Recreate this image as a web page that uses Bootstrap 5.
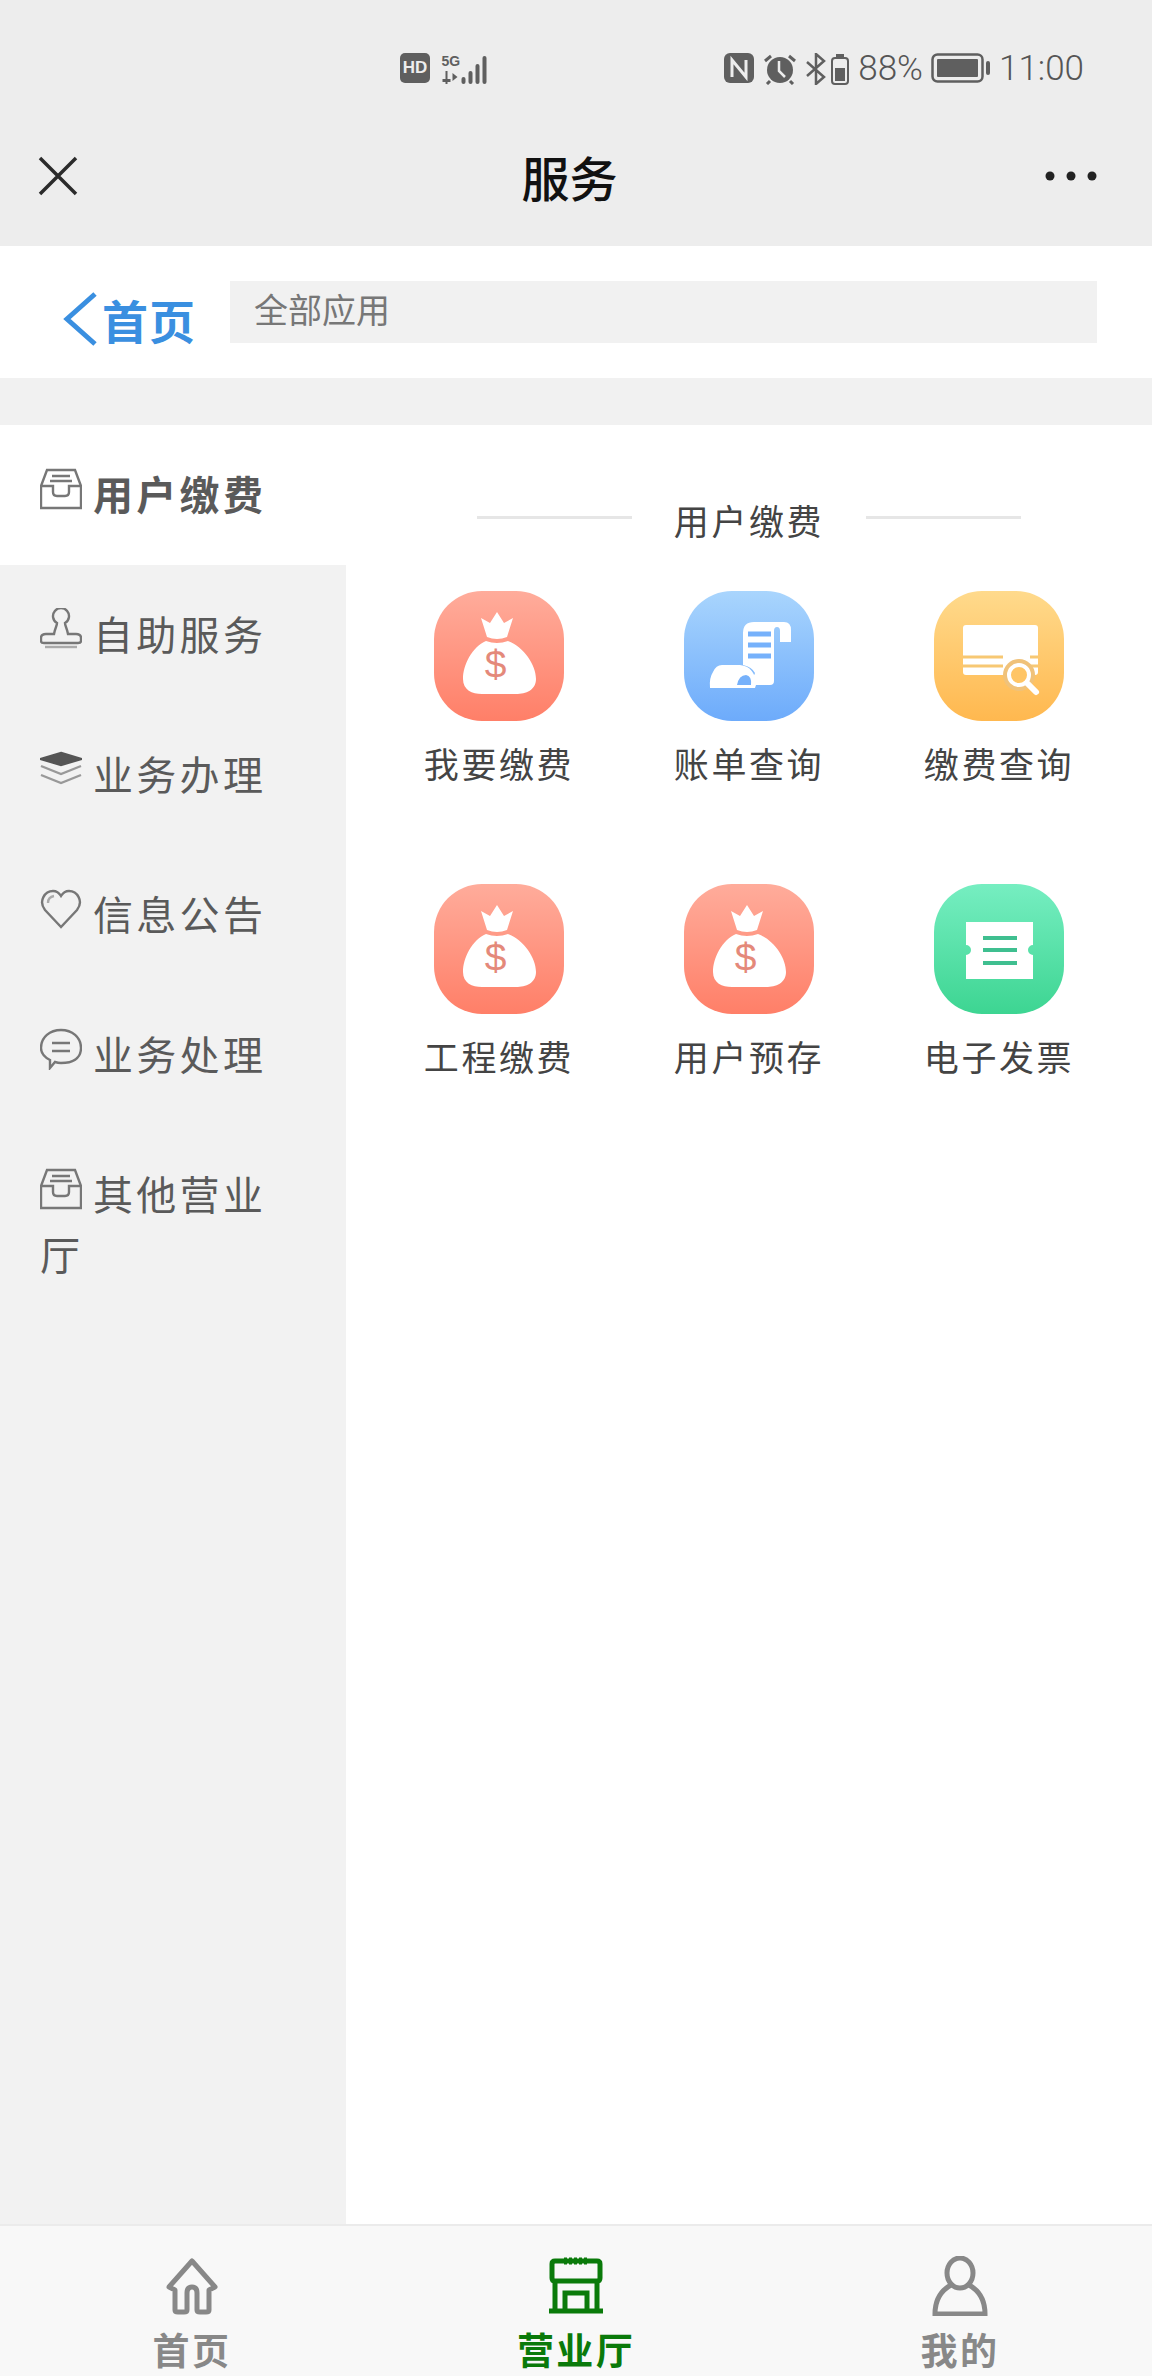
<!DOCTYPE html>
<html lang="zh-CN">
<head>
  <meta charset="UTF-8" />
  <meta name="viewport" content="width=device-width, initial-scale=1" />
  <title>服务</title>
  <link href="https://cdn.jsdelivr.net/npm/bootstrap@5.3.0/dist/css/bootstrap.min.css" rel="stylesheet">
  <style>
    html, body { height: 100%; }
    body {
      font-family: "Noto Sans CJK SC", "Noto Sans", sans-serif;
      background: #fff;
      overflow: hidden;
    }

    /* top grey area */
    .top-area { background: #ededed; height: 246px; flex: none; }
    .status-line { height: 90px; padding: 53px 68px 0 400px; color: #5f5f5f; }
    .status-txt { font-family: Roboto, "Liberation Sans", sans-serif; font-size: 35px; line-height: 32px; font-weight: 300; color: #555; }
    .hd-tag { width: 30px; height: 30px; border-radius: 5px; background: #5f5f5f; color: #ededed; font: 700 17px/30px "Liberation Sans", sans-serif; text-align: center; }
    .title-line { height: 156px; padding: 15px 55px 0 38px; }
    .page-title { font-size: 48px; font-weight: 500; color: #111; line-height: 60px; margin-left: 16px; }

    /* back row */
    .back-line { height: 132px; flex: none; padding: 35px 55px 0 62px; }
    .back-link { color: #3a8fe0; font-size: 46px; font-weight: 700; line-height: 60px; width: 168px; letter-spacing: 1px; flex: none; margin-top: 8px; }
    .search-box { background: #f1f1f1; height: 62px; flex: 1; color: #777; font-size: 34px; line-height: 56px; padding-left: 24px; }
    .gap-strip { background: #f1f1f1; height: 47px; flex: none; }

    /* left menu */
    .side-menu { width: 346px; background: #f2f2f2; flex: none; }
    .side-item { padding: 38px 50px 42px 40px; font-size: 40px; line-height: 60px; letter-spacing: 3.3px; color: #5a5a5a; }
    .side-item.on { background: #fff; font-weight: 700; }
    .side-item svg { width: 42px; height: 42px; margin-right: 11px; vertical-align: 0; fill: none; stroke: #777; stroke-width: 2.4; }

    /* apps */
    .app-wrap { padding: 0 28px; }
    .group-head { height: 166px; padding-top: 23px; }
    .group-name { font-size: 35px; line-height: 68px; color: #444; letter-spacing: 2.6px; width: 234px; text-align: center; }
    .group-rule { width: 155px; height: 3px; background: #e6e6e6; margin-top: -4px; }
    .app-cell { height: 293px; text-align: center; color: #444; font-size: 35px; letter-spacing: 2.6px; line-height: 50px; }
    .app-tile { display: block; width: 130px; height: 130px; margin: 0 auto 17px; border-radius: 48px; }
    .tile-red { background: linear-gradient(#ffac9b, #ff7f68); }
    .tile-blue { background: linear-gradient(#a9d5fd, #6dabfb); }
    .tile-yellow { background: linear-gradient(#ffda8c, #ffb84f); }
    .tile-green { background: linear-gradient(#76eec1, #3dd592); }
    .bag-mark { font: 400 39px "Liberation Sans", sans-serif; fill: #e4897a; }

    /* bottom tabs */
    .tab-bar { height: 152px; flex: none; background: #f8f8f8; border-top: 2px solid #ebebeb; }
    .tab-cell { text-align: center; color: #888; font-size: 37px; font-weight: 700; line-height: 40px; letter-spacing: 2.4px; padding-top: 30px; }
    .tab-cell.on { color: #0a7a0a; }
    .tab-cell svg { display: block; margin: 0 auto 13px; width: 60px; height: 60px; }
  </style>
</head>
<body class="d-flex flex-column">
  <svg width="0" height="0" class="d-block">
    <symbol id="bag" viewBox="0 0 130 130">
      <path fill="#fff" d="M47 27l9 5 7-11 7 11 9-5-6 19q-10 4-20 0z"/>
      <path fill="#fff" d="M52 50q11 4 22 0c16 6 28 24 28 38 0 11-10 15-20 15H48c-10 0-19-4-19-15 0-14 9-32 23-38z"/>
    </symbol>
    <symbol id="tray" viewBox="0 0 42 42">
      <path d="M1 40V18L7 2h28l6 16v22z"/>
      <path d="M1 18h12v6q0 4 4 4h8q4 0 4-4v-6h12"/>
      <path d="M12 8h18M10 13h22"/>
    </symbol>
  </svg>

  <!-- status + title -->
  <div class="top-area">
    <div class="status-line d-flex align-items-start">
      <div class="hd-tag">HD</div>
      <svg class="ms-2" width="52" height="32" viewBox="0 0 47 32" fill="#5f5f5f">
        <text x="1" y="13" font-family="Liberation Sans" font-weight="700" font-size="14">5G</text>
        <path d="M2 26h8v3H2zM5 18h2v13H5zM12 20l5 4-5 4z"/>
        <rect x="21" y="24" width="4" height="7" rx="2"/><rect x="28" y="18" width="4" height="13" rx="2"/><rect x="35" y="11" width="4" height="20" rx="2"/><rect x="42" y="3" width="4" height="28" rx="2"/>
      </svg>
      <div class="ms-auto d-flex align-items-start">
        <svg width="30" height="30" viewBox="0 0 30 30"><rect width="30" height="30" rx="6" fill="#5f5f5f"/><path d="M8 24V7l14 17V7" fill="none" stroke="#ededed" stroke-width="3"/></svg>
        <svg class="ms-2" width="36" height="32" viewBox="0 0 36 32"><circle cx="18" cy="17" r="13" fill="#5f5f5f"/><path d="M17 8v10l6 6" fill="none" stroke="#ededed" stroke-width="2.5"/><path d="M3 8l6-5M33 8l-6-5M8 28l-3 3M28 28l3 3" stroke="#5f5f5f" stroke-width="3"/></svg>
        <svg class="ms-2" width="20" height="32" viewBox="0 0 20 32"><path d="M1 9l17 15-8 7V1l8 7L1 23" fill="none" stroke="#5f5f5f" stroke-width="2.5"/></svg>
        <svg class="ms-1" width="20" height="32" viewBox="0 0 20 32"><path d="M6 1h8v3H6z" fill="#5f5f5f"/><rect x="2" y="5" width="16" height="26" rx="3" fill="none" stroke="#5f5f5f" stroke-width="2"/><rect x="5" y="15" width="10" height="13" fill="#5f5f5f"/></svg>
        <div class="status-txt ms-2">88%</div>
        <svg class="ms-2" width="60" height="30" viewBox="0 0 60 30"><rect x="1.5" y="1.5" width="50" height="27" rx="5" fill="none" stroke="#5f5f5f" stroke-width="2.5"/><rect x="6" y="6" width="41" height="18" rx="1" fill="#5f5f5f"/><rect x="55" y="8" width="4" height="14" rx="2" fill="#5f5f5f"/></svg>
        <div class="status-txt ms-2">11:00</div>
      </div>
    </div>
    <div class="title-line d-flex align-items-center justify-content-between">
      <svg width="40" height="40" viewBox="0 0 40 40"><path d="M2 2l36 36M38 2L2 38" stroke="#2b2b2b" stroke-width="3.5"/></svg>
      <div class="page-title">服务</div>
      <svg width="52" height="10" viewBox="0 0 52 10" fill="#222"><circle cx="5" cy="5" r="4.5"/><circle cx="26" cy="5" r="4.5"/><circle cx="47" cy="5" r="4.5"/></svg>
    </div>
  </div>

  <!-- back row -->
  <div class="back-line d-flex align-items-start">
    <div class="back-link d-flex align-items-center">
      <svg class="me-1 flex-shrink-0" width="36" height="56" viewBox="0 0 36 56"><path d="M33 3L5 28l28 25" fill="none" stroke="#3a8fe0" stroke-width="5"/></svg>
      首页
    </div>
    <div class="search-box">全部应用</div>
  </div>
  <div class="gap-strip"></div>

  <!-- main -->
  <div class="d-flex flex-grow-1 overflow-hidden">
    <div class="side-menu">
      <div class="side-item on"><svg><use href="#tray"/></svg>用户缴费</div>
      <div class="side-item">
        <svg viewBox="0 0 42 42"><path d="M14 26c1-6 3-8 3-11a8 8 0 1 1 8 0c0 3 2 5 3 11h8q5 0 5 4v3q0 2-3 2H4q-3 0-3-2v-3q0-4 5-4z"/><path d="M5 39h32" stroke="#aaa"/></svg>自助服务
      </div>
      <div class="side-item">
        <svg viewBox="0 0 42 42"><path d="M21 5l20 6-20 6L1 11z" fill="#555" stroke="#555"/><path d="M1 18l20 8 20-8M1 27l20 8 20-8" stroke="#999"/></svg>业务办理
      </div>
      <div class="side-item">
        <svg viewBox="0 0 42 42"><path d="M21 39L5 22C-2 13 5 3 13 3q5 0 8 5 3-5 8-5c8 0 15 10 8 19z"/><path d="M8 15q0-6 6-7" stroke="#aaa"/></svg>信息公告
      </div>
      <div class="side-item">
        <svg viewBox="0 0 42 42"><path d="M10 32C4 29 1 25 1 20 1 9 10 2 21 2s20 7 20 18-9 15-20 15q-3 0-6-1l-5 6z"/><path d="M12 15h18M12 23h18"/></svg>业务处理
      </div>
      <div class="side-item"><svg><use href="#tray"/></svg>其他营业厅</div>
    </div>

    <div class="app-wrap flex-grow-1">
      <div class="group-head d-flex justify-content-center align-items-center">
        <div class="group-rule"></div>
        <div class="group-name">用户缴费</div>
        <div class="group-rule"></div>
      </div>
      <div class="row g-0">
        <div class="col-4 app-cell">
          <svg class="app-tile tile-red" viewBox="0 0 130 130"><use href="#bag" width="130" height="130"/><text class="bag-mark" x="63" y="87" text-anchor="middle">$</text></svg>我要缴费
        </div>
        <div class="col-4 app-cell">
          <svg class="app-tile tile-blue" viewBox="0 0 130 130">
            <path fill="#fff" d="M70 31h30q7 0 7 8v12H96V40q0-4-3-4-3 0-3 4v50q0 4-4 4H64l2-8q4 0 5-4V82q-3-6-12-8V42q0-11 11-11z"/>
            <path fill="#fff" d="M38 74h18c10 1 16 8 16 20l-1 3H26q-1-10 3-16 3-7 9-7z"/>
            <path fill="#76b1fb" d="M53 94q2-10 9-10 6 1 5 10z"/>
            <path stroke="#76b1fb" stroke-width="5" d="M64 43h23M64 54h23M64 65h23"/>
          </svg>账单查询
        </div>
        <div class="col-4 app-cell">
          <svg class="app-tile tile-yellow" viewBox="0 0 130 130">
            <rect fill="#fff" x="29" y="34" width="75" height="50" rx="3"/>
            <path stroke="#f7c873" stroke-width="3" d="M29 66h40M29 75h40M96 66h8M96 75h8"/>
            <circle cx="85" cy="84" r="16" fill="#f0c27a"/>
            <circle cx="85" cy="84" r="10" fill="#ffc565" stroke="#fff" stroke-width="4"/>
            <path stroke="#fff" stroke-width="6" stroke-linecap="round" d="M94 93l8 8"/>
          </svg>缴费查询
        </div>
        <div class="col-4 app-cell">
          <svg class="app-tile tile-red" viewBox="0 0 130 130"><use href="#bag" width="130" height="130"/><text class="bag-mark" x="63" y="87" text-anchor="middle">$</text></svg>工程缴费
        </div>
        <div class="col-4 app-cell">
          <svg class="app-tile tile-red" viewBox="0 0 130 130"><use href="#bag" width="130" height="130"/><text class="bag-mark" x="63" y="87" text-anchor="middle">$</text></svg>用户预存
        </div>
        <div class="col-4 app-cell">
          <svg class="app-tile tile-green" viewBox="0 0 130 130">
            <path fill="#fff" d="M32 38h67v23a5 5 0 0 0 0 10v24H32V71a5 5 0 0 0 0-10z"/>
            <path stroke="#3fbf90" stroke-width="4" d="M49 54h34M49 66h34M49 79h34"/>
          </svg>电子发票
        </div>
      </div>
    </div>
  </div>

  <!-- tabs -->
  <div class="tab-bar row g-0">
    <div class="col-4 tab-cell">
      <svg viewBox="0 0 60 60" fill="none" stroke="#888" stroke-width="5" stroke-linejoin="round"><path d="M13 34l-6-3L30 5l23 26-6 3v20q0 2-3 2h-6q-3 0-3-2V37q0-6-5-6t-5 6v17q0 2-3 2h-6q-3 0-3-2z"/></svg>
      首页
    </div>
    <div class="col-4 tab-cell on">
      <svg viewBox="0 0 60 60" fill="none" stroke="#0a7a0a" stroke-width="5"><path d="M6 22V8q0-3 3-3h42q3 0 3 3v14q0 3-3 3H9q-3 0-3-3zM9 25v30M51 25v30M3 55h54M19 55V37h22v18"/><path d="M18 5h24" stroke-dasharray="3 2" stroke-width="7"/></svg>
      营业厅
    </div>
    <div class="col-4 tab-cell">
      <svg viewBox="0 0 60 60" fill="none" stroke="#888" stroke-width="5"><ellipse cx="30" cy="17" rx="13" ry="15"/><path d="M21 29C10 35 5 46 5 58h50c0-12-5-23-16-29"/></svg>
      我的
    </div>
  </div>

  <script src="https://cdn.jsdelivr.net/npm/bootstrap@5.3.0/dist/js/bootstrap.bundle.min.js"></script>
</body>
</html>
